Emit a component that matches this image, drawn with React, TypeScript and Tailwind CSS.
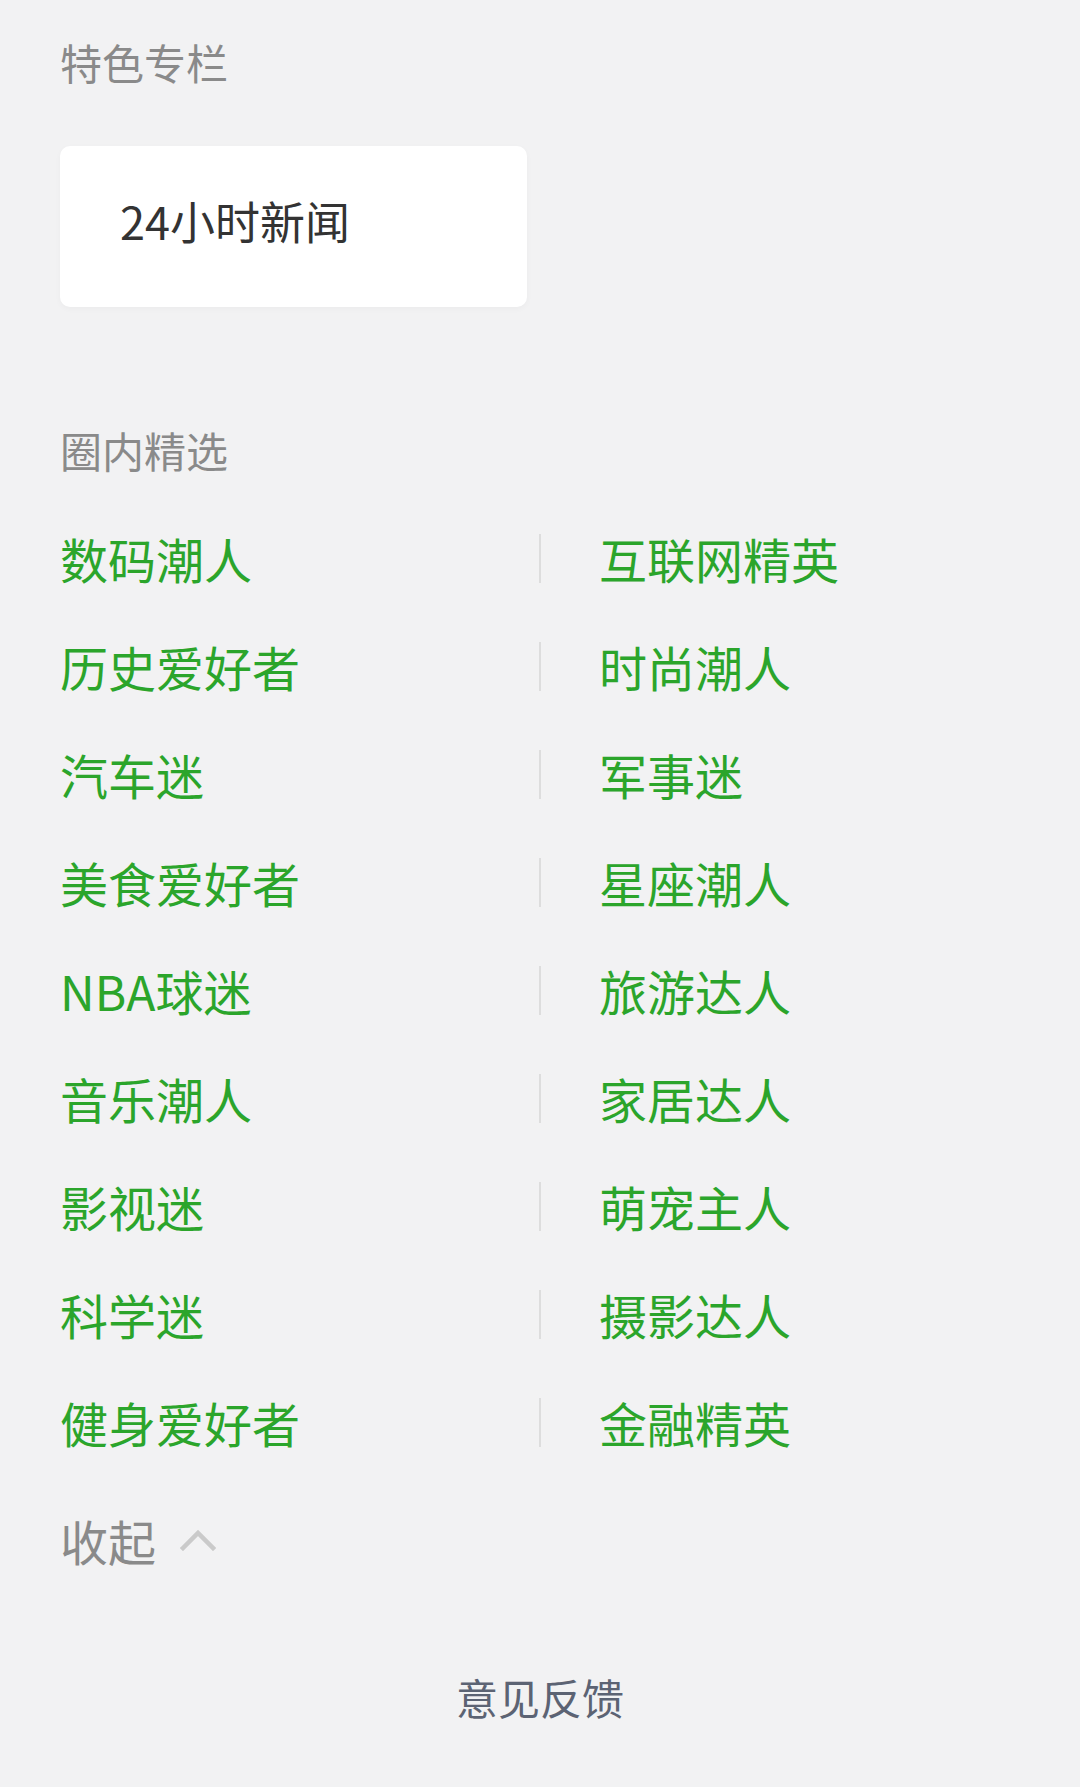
const circles = [
  ['数码潮人', '互联网精英'],
  ['历史爱好者', '时尚潮人'],
  ['汽车迷', '军事迷'],
  ['美食爱好者', '星座潮人'],
  ['NBA球迷', '旅游达人'],
  ['音乐潮人', '家居达人'],
  ['影视迷', '萌宠主人'],
  ['科学迷', '摄影达人'],
  ['健身爱好者', '金融精英'],
];

function CircleRow({ left, right }: { left: string; right: string }) {
  return (
    <div className="flex h-[108px] items-center">
      <div className="w-[479px] text-[48px] leading-[48px] text-[#2ba52b]">{left}</div>
      <div className="h-[49px] w-[2px] bg-[#dddddd]"></div>
      <div className="pl-[58px] text-[48px] leading-[48px] text-[#2ba52b]">{right}</div>
    </div>
  );
}

export default function App() {
  return (
    <div className="h-[1787px] w-[1080px] overflow-hidden bg-[#f2f2f3] font-['Noto_Sans_CJK_SC','Noto_Sans',sans-serif]">
      <div className="pl-[60px] pt-[41px]">
        {/* 特色专栏 */}
        <h2 className="text-[42px] leading-[42px] font-normal text-[#8a8a8a]">特色专栏</h2>
        <div className="mt-[63px] flex h-[161px] w-[467px] rounded-[10px] bg-white pl-[60px] pt-[52px] shadow-[0_2px_6px_rgba(0,0,0,0.03)]">
          <span className="text-[45px] leading-[45px] text-[#333333]">24小时新闻</span>
        </div>

        {/* 圈内精选 */}
        <h2 className="mt-[122px] text-[42px] leading-[42px] font-normal text-[#8a8a8a]">圈内精选</h2>
        <div className="mt-[33px]">
          {circles.map(([l, r]) => (
            <CircleRow key={l} left={l} right={r} />
          ))}
        </div>

        <button className="mt-[40px] flex items-center gap-[24px]">
          <span className="text-[48px] leading-[48px] text-[#8a8a8a]">收起</span>
          <svg width="36" height="22" viewBox="0 0 36 22" fill="none">
            <polyline points="3,19 18,4 33,19" stroke="#cacaca" strokeWidth="4.5" strokeLinecap="square" />
          </svg>
        </button>
      </div>

      <div className="mt-[112px] text-center text-[42px] leading-[42px] text-[#5c6373]">意见反馈</div>
    </div>
  );
}
